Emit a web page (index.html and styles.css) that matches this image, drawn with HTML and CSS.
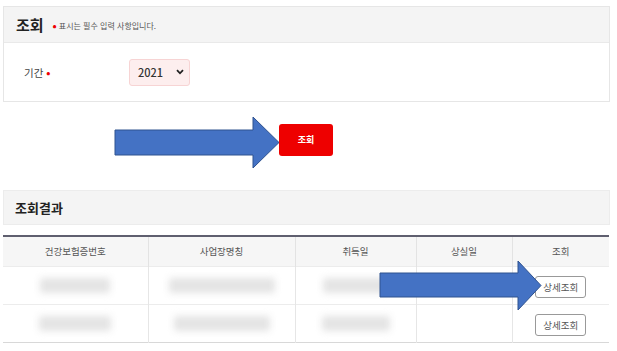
FILE: index.html
```html
<!DOCTYPE html>
<html lang="ko">
<head>
<meta charset="utf-8">
<link rel="stylesheet" href="styles.css">
</head>
<body>
<div class="page">
  <section class="panel">
    <div class="panel-head">
      <h2 class="panel-title">조회</h2>
      <span class="req-note"><span class="dot">•</span> 표시는 필수 입력 사항입니다.</span>
    </div>
    <div class="panel-body">
      <div class="field">
        <label class="field-label">기간 <span class="dot">•</span></label>
        <div class="select">
          <span class="select-value">2021</span>
          <svg class="chev" width="8" height="6" viewBox="0 0 8 6"><path d="M1 1.2 L4 4.3 L7 1.2" fill="none" stroke="#222" stroke-width="1.8"/></svg>
        </div>
      </div>
    </div>
  </section>

  <div class="actions">
    <svg class="arrow-big" width="167" height="53" viewBox="0 0 167 53">
      <path d="M1 14 H139 V1 L165 26.5 L139 52 V39 H1 Z" fill="#4472c4" stroke="#2f528f" stroke-width="1"/>
    </svg>
    <button class="btn-search">조회</button>
  </div>

  <div class="result-head">
    <h2 class="result-title">조회결과</h2>
  </div>

  <div class="table-wrap">
    <table class="result">
      <colgroup>
        <col class="c1"><col class="c2"><col class="c3"><col class="c4"><col class="c5">
      </colgroup>
      <thead>
        <tr><th>건강보험증번호</th><th>사업장명칭</th><th>취득일</th><th>상실일</th><th>조회</th></tr>
      </thead>
      <tbody>
        <tr>
          <td><div class="blur w72"></div></td>
          <td><div class="blur w106"></div></td>
          <td><div class="blur w62"></div></td>
          <td></td>
          <td><button class="btn-detail">상세조회</button></td>
        </tr>
        <tr>
          <td><div class="blur w74"></div></td>
          <td><div class="blur w96"></div></td>
          <td><div class="blur w68"></div></td>
          <td></td>
          <td><button class="btn-detail">상세조회</button></td>
        </tr>
      </tbody>
    </table>
    <svg class="arrow-over" width="164" height="53" viewBox="0 0 164 53">
      <path d="M1 13 H139 V1 L162 25.5 L139 50 V37 H1 Z" fill="#4472c4" stroke="#2f528f" stroke-width="1"/>
    </svg>
  </div>
</div>
</body>
</html>
```

FILE: styles.css
```css
* { box-sizing: border-box; }
html, body { margin: 0; padding: 0; background: #fff; }
body {
  font-family: "Noto Sans CJK KR", "Noto Sans", sans-serif;
  color: #333;
}
.page {
  width: 617px;
  padding: 6px 7px 0 3px;
}
.panel {
  border: 1px solid #e6e6e6;
  background: #fff;
}
.panel-head {
  height: 36px;
  background: #f4f4f4;
  border-bottom: 1px solid #e9e9e9;
  display: flex;
  align-items: center;
  padding-left: 12px;
  gap: 9px;
}
.panel-title {
  margin: 0;
  font-size: 15px;
  font-weight: 700;
  color: #222;
  line-height: 1;
}
.req-note {
  font-size: 8px;
  color: #555;
  display: flex;
  align-items: center;
  gap: 2px;
  margin-top: 1px;
}
.dot { color: #e00; font-weight: 700; font-size: 11px; line-height: 1; }
.panel-body {
  height: 58px;
  display: flex;
  align-items: center;
  padding-left: 20px;
}
.field {
  display: flex;
  align-items: center;
}
.field-label {
  width: 105px;
  font-size: 10.5px;
  color: #444;
}
.select {
  width: 61px;
  height: 27px;
  background: #fdeeee;
  border: 1px solid #f7d4d4;
  border-radius: 3px;
  display: flex;
  align-items: center;
  justify-content: space-between;
  padding: 0 5px 0 8px;
}
.select-value {
  font-size: 11px;
  color: #333;
  font-weight: 500;
}
.chev { display: block; }

.actions {
  height: 88px;
  display: flex;
  align-items: center;
  padding-left: 111px;
  padding-bottom: 7px;
}
.arrow-big { display: block; }
.btn-search {
  margin-left: -2px;
  width: 54px;
  height: 32px;
  background: #ee0000;
  color: #fff;
  border: 0;
  border-radius: 3px;
  font-family: inherit;
  font-size: 9px;
  font-weight: 700;
  margin-top: -6px;
}

.result-head {
  height: 35px;
  background: #f4f4f4;
  border: 1px solid #ececec;
  display: flex;
  align-items: center;
  padding-left: 11px;
}
.result-title {
  margin: 0;
  font-size: 13px;
  font-weight: 700;
  color: #222;
}

.table-wrap {
  position: relative;
  margin-top: 10px;
}
.result {
  width: 606px;
  border-collapse: collapse;
  table-layout: fixed;
  border-top: 2px solid #5f5f6f;
  border-bottom: 1px solid #d8d8d8;
}
.c1 { width: 145px; }
.c2 { width: 147px; }
.c3 { width: 121px; }
.c4 { width: 96px; }
.c5 { width: 97px; }
.result th {
  height: 30px;
  background: #f6f6f6;
  font-size: 9.5px;
  font-weight: 400;
  color: #555;
  border-left: 1px solid #e3e3e3;
  padding: 0;
}
.result th:first-child, .result td:first-child { border-left: 0; }
.result td {
  height: 38px;
  border-left: 1px solid #e6e6e6;
  border-top: 1px solid #ececec;
  padding: 0;
  text-align: center;
}
.blur {
  height: 15px;
  margin: 0 auto;
  background: #e4e4e4;
  filter: blur(3.5px);
  border-radius: 2px;
}
.w72 { width: 70px; }
.w74 { width: 72px; }
.w106 { width: 106px; }
.w96 { width: 96px; }
.w62 { width: 66px; }
.w68 { width: 68px; }
.btn-detail {
  width: 51px;
  height: 22px;
  background: #fff;
  border: 1px solid #999;
  border-radius: 3px;
  font-family: inherit;
  font-size: 9.5px;
  color: #555;
  padding: 0;
}
.arrow-over {
  position: absolute;
  left: 376px;
  top: 25px;
  display: block;
}
```
